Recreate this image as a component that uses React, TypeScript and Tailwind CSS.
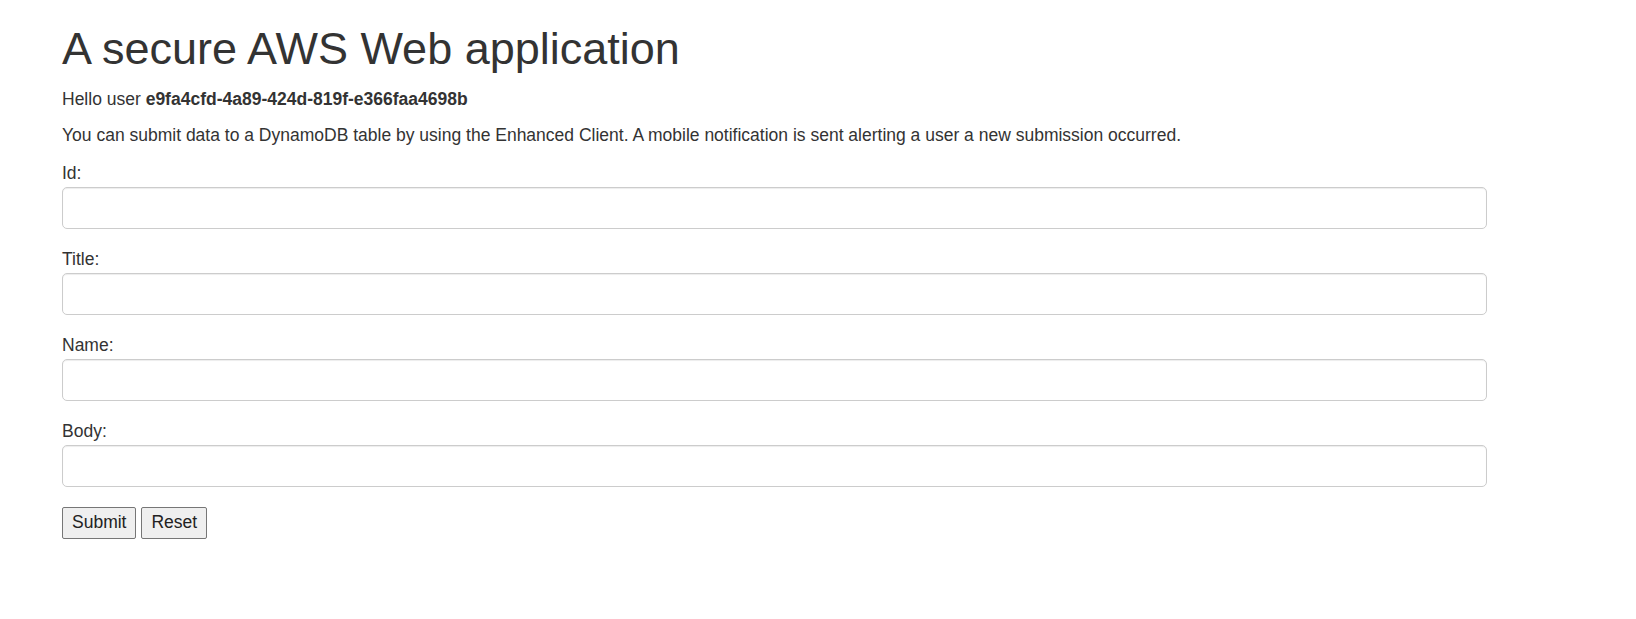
export default function App() {
  const fields = ['Id:', 'Title:', 'Name:', 'Body:'];

  return (
    <div className="min-h-screen bg-white font-['Liberation_Sans',Arial,sans-serif] text-[#333333]">
      <div className="pl-[62px] pt-[24px] w-[1487px]">
        <h1 className="text-[45px] leading-[49.5px] font-normal mb-[13px]">A secure AWS Web application</h1>

        <p className="text-[17.5px] leading-[25px] mb-[11.5px]">
          Hello user <b>e9fa4cfd-4a89-424d-819f-e366faa4698b</b>
        </p>
        <p className="text-[17.5px] leading-[25px] mb-[12.5px]">
          You can submit data to a DynamoDB table by using the Enhanced Client. A mobile notification is sent alerting a user a new submission occurred.
        </p>

        <form onSubmit={(e) => e.preventDefault()}>
          <div className="flex flex-col gap-[17.5px] mb-[20px]">
            {fields.map((label) => (
              <div key={label}>
                <label className="block text-[17.5px] leading-[25px] mb-[1.5px]">{label}</label>
                <input
                  type="text"
                  className="block w-full h-[42px] px-[15px] rounded-[5px] border border-[#cccccc] bg-white text-[17.5px] shadow-[inset_0_1px_1px_rgba(0,0,0,0.075)] outline-none"
                />
              </div>
            ))}
          </div>

          <div className="flex gap-[5px]">
            <button
              type="submit"
              className="h-[32px] px-[9px] text-[17.5px] leading-none bg-[#efefef] border border-[#767676] rounded-[2px] text-[#222]"
            >
              Submit
            </button>
            <button
              type="reset"
              className="h-[32px] px-[9px] text-[17.5px] leading-none bg-[#efefef] border border-[#767676] rounded-[2px] text-[#222]"
            >
              Reset
            </button>
          </div>
        </form>
      </div>
    </div>
  );
}
